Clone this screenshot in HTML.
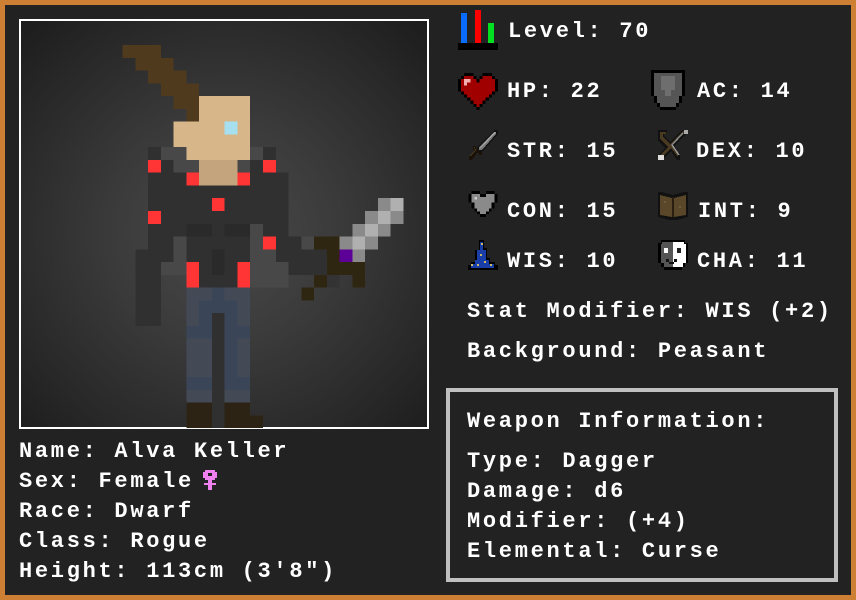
<!DOCTYPE html>
<html><head><meta charset="utf-8"><style>
*{margin:0;padding:0;box-sizing:border-box}
body{width:856px;height:600px;background:#cd8033;position:relative;overflow:hidden}
#main{position:absolute;left:5px;top:5px;width:846px;height:590px;background:#222222}
.t{position:absolute;color:#fff;font-family:"Liberation Mono",monospace;font-weight:bold;font-size:22px;line-height:22px;letter-spacing:2.7px;white-space:pre}
#img{position:absolute;left:19px;top:19px;width:410px;height:410px;border:2px solid #fff;background:radial-gradient(circle at 50% 52%,#4a4a4a 0%,#3a3a3a 40%,#1c1c1c 100%);overflow:hidden}
#wbox{position:absolute;left:446px;top:388px;width:392px;height:194px;border:4px solid #c0c0c0}
svg{position:absolute;shape-rendering:crispEdges}
</style></head><body>
<div id="main"></div>
<div id="img"></div>
<svg style="left:96.5px;top:45px" width="319.25" height="383.1" viewBox="0 0 25 30">
<g fill="#4f3a1d"><rect x="2" y="0" width="3" height="1"/><rect x="3" y="1" width="3" height="1"/><rect x="4" y="2" width="3" height="1"/><rect x="5" y="3" width="3" height="1"/><rect x="6" y="4" width="2" height="1"/><rect x="7" y="5" width="1" height="1"/></g>
<g fill="#303030"><rect x="4" y="8" width="1" height="1"/><rect x="13" y="8" width="1" height="1"/><rect x="5" y="9" width="1" height="1"/><rect x="12" y="9" width="1" height="1"/><rect x="4" y="10" width="11" height="5"/><rect x="4" y="15" width="2" height="1"/><rect x="7" y="15" width="5" height="1"/><rect x="14" y="15" width="2" height="1"/><rect x="3" y="16" width="3" height="1"/><rect x="7" y="16" width="5" height="1"/><rect x="14" y="16" width="4" height="1"/><rect x="3" y="17" width="2" height="5"/><rect x="8" y="17" width="3" height="2"/><rect x="15" y="17" width="3" height="1"/><rect x="9" y="19" width="1" height="11"/></g>
<g fill="#484848"><rect x="5" y="8" width="2" height="1"/><rect x="11" y="8" width="2" height="1"/><rect x="6" y="9" width="2" height="1"/><rect x="11" y="9" width="1" height="1"/><rect x="12" y="14" width="1" height="2"/><rect x="6" y="15" width="1" height="2"/><rect x="16" y="15" width="1" height="1"/><rect x="12" y="16" width="2" height="1"/><rect x="5" y="17" width="2" height="1"/><rect x="12" y="17" width="3" height="2"/></g>
<g fill="#2a2a2a"><rect x="7" y="14" width="2" height="1"/><rect x="10" y="14" width="2" height="1"/><rect x="9" y="16" width="1" height="2"/></g>
<g fill="#d7b68a"><rect x="8" y="4" width="4" height="2"/><rect x="6" y="6" width="6" height="2"/><rect x="7" y="8" width="5" height="1"/></g>
<rect x="10" y="6" width="1" height="1" fill="#a6e0f0"/>
<rect x="8" y="9" width="3" height="2" fill="#c4a47c"/>
<g fill="#ff3535"><rect x="4" y="9" width="1" height="1"/><rect x="13" y="9" width="1" height="1"/><rect x="7" y="10" width="1" height="1"/><rect x="11" y="10" width="1" height="1"/><rect x="9" y="12" width="1" height="1"/><rect x="4" y="13" width="1" height="1"/><rect x="13" y="15" width="1" height="1"/><rect x="7" y="17" width="1" height="2"/><rect x="11" y="17" width="1" height="2"/></g>
<g fill="#444a55"><rect x="7" y="19" width="2" height="1"/><rect x="10" y="19" width="2" height="1"/><rect x="7" y="20" width="1" height="2"/><rect x="11" y="20" width="1" height="2"/><rect x="7" y="23" width="2" height="3"/><rect x="11" y="23" width="1" height="3"/><rect x="7" y="27" width="2" height="1"/><rect x="10" y="27" width="2" height="1"/></g>
<g fill="#3a4558"><rect x="9" y="19" width="1" height="1"/><rect x="8" y="20" width="3" height="1"/><rect x="8" y="21" width="1" height="1"/><rect x="10" y="21" width="1" height="1"/><rect x="7" y="22" width="2" height="1"/><rect x="10" y="22" width="2" height="1"/><rect x="10" y="23" width="1" height="3"/><rect x="7" y="26" width="2" height="1"/><rect x="10" y="26" width="2" height="1"/></g>
<g fill="#2c2314"><rect x="7" y="28" width="2" height="2"/><rect x="10" y="28" width="2" height="2"/><rect x="12" y="29" width="1" height="1"/></g>
<g fill="#2e2610"><rect x="17" y="15" width="2" height="1"/><rect x="18" y="16" width="1" height="1"/><rect x="18" y="17" width="3" height="1"/><rect x="17" y="18" width="1" height="1"/><rect x="20" y="18" width="1" height="1"/><rect x="16" y="19" width="1" height="1"/></g>
<rect x="18" y="18" width="1" height="1" fill="#333"/>
<g fill="#8a8a8a"><rect x="22" y="12" width="1" height="1"/><rect x="21" y="13" width="1" height="1"/><rect x="23" y="13" width="1" height="1"/><rect x="20" y="14" width="1" height="1"/><rect x="22" y="14" width="1" height="1"/><rect x="19" y="15" width="1" height="1"/><rect x="21" y="15" width="1" height="1"/><rect x="20" y="16" width="1" height="1"/></g>
<g fill="#b0b0b0"><rect x="23" y="12" width="1" height="1"/><rect x="22" y="13" width="1" height="1"/><rect x="21" y="14" width="1" height="1"/><rect x="20" y="15" width="1" height="1"/></g>
<rect x="19" y="16" width="1" height="1" fill="#5c0097"/>
</svg>

<svg style="left:458px;top:10px" width="40" height="40" viewBox="0 0 40 40">
<rect x="3" y="3" width="6" height="30" fill="#0a6cff"/><rect x="17" y="0" width="6" height="33" fill="#ff0000"/><rect x="30" y="13" width="6" height="20" fill="#00e020"/><rect x="0" y="33" width="40" height="7" fill="#000"/>
</svg>
<svg style="left:458px;top:73px" width="40" height="37" viewBox="0 0 13 12">
<path d="M2 0h3v1h1v1h1v-1h1v-1h3v1h1v1h1v4h-1v1h-1v1h-1v1h-1v1h-1v1h-1v1h-1v-1h-1v-1h-1v-1h-1v-1h-1v-1h-1v-1h-1v-4h1v-1h1z" fill="#000"/>
<path d="M3 1h2v1h1v1h1v-1h1v-1h3v1h1v4h-1v1h-1v1h-1v1h-1v1h-1v1h-1v-1h-1v-1h-1v-1h-1v-1h-1v-1h-1v-4h1v-1h1z" fill="#a00000"/>
<rect x="2" y="2" width="2" height="2" fill="#f4b0b0"/><rect x="3" y="3" width="1" height="1" fill="#a00000"/>
</svg>
<svg style="left:651px;top:70px" width="34" height="40" viewBox="0 0 34 40">
<path d="M0 0h34v26h-3v7h-3v4h-3v3h-16v-3h-3v-4h-3v-7h-3z" fill="#000"/>
<path d="M3 3h28v23h-3v7h-3v4h-16v-4h-3v-7h-3z" fill="#555"/>
<rect x="10" y="6" width="14" height="14" fill="#6e6e6e"/><rect x="14" y="20" width="6" height="6" fill="#6e6e6e"/>
</svg>
<svg style="left:468px;top:130px" width="30" height="30" viewBox="0 0 30 30">
<path d="M27 0h3v4l-16 18h-5v-5z" fill="#111"/>
<path d="M26 2h2v2l-14 16h-3v-3z" fill="#7a7a7a"/><path d="M26 2h2l-15 16h-1z" fill="#a8a8a8"/>
<path d="M5 16h3v3h3v3h3v3h-3v-2h-2l-5 7h-3v-3l6-5v-2h-2z" fill="#1a1208"/><path d="M6 17h1v2h1v1l-5 6h-1v-1l5-5z" fill="#4a3a20"/>
</svg>
<svg style="left:658px;top:130px" width="30" height="30" viewBox="0 0 30 30">
<path d="M0 0h9v3h-3v3l6 6 12-12h4v4l-12 12 6 8v6h-3l-6-9-7 7h-6v-3l7-7-7-7z" fill="#111"/>
<path d="M2 2h6v2h-3v3l7 7 13-13h2l-13 13 6 8v5l-7-9-7 7h-4l8-8-8-8z" fill="#4a3a22"/>
<path d="M14 15l11-12" stroke="#888" stroke-width="1.5"/><path d="M14 15l7 10" stroke="#999" stroke-width="1.5"/>
<rect x="0" y="25" width="6" height="5" fill="#ddd"/><rect x="26" y="0" width="4" height="4" fill="#aaa"/>
</svg>
<svg style="left:468px;top:191px" width="30" height="29" viewBox="0 0 10 10">
<path d="M1 0h3v1h2v-1h3v1h1v3h-1v2h-1v1h-1v1h-1v1h-2v-1h-1v-1h-1v-1h-1v-2h-1v-3h1z" fill="#000"/>
<path d="M1 1h3v1h2v-1h3v3h-1v2h-1v1h-1v1h-2v-1h-1v-1h-1v-2h-1z" fill="#8a8a8a"/>
<rect x="2" y="2" width="1" height="1" fill="#ccc"/>
</svg>
<svg style="left:658px;top:192px" width="30" height="28" viewBox="0 0 30 28">
<path d="M0 0h4l11 3l11-3h4v25l-11 3h-8l-11-3z" fill="#111"/>
<path d="M2 3l12 3v19l-12-2z" fill="#5a4628"/><path d="M16 6l12-3v20l-12 2z" fill="#5a4628"/>
<rect x="14" y="5" width="2" height="20" fill="#2a1e10"/>
<rect x="6" y="9" width="2" height="2" fill="#6e5a38"/><rect x="21" y="14" width="2" height="2" fill="#6e5a38"/>
</svg>
<svg style="left:468px;top:240px" width="30" height="30" viewBox="0 0 30 30">
<path d="M11 0h5v8h3v10h3v4h5v3h3v5h-30v-5h3v-3h4v-12h4z" fill="#000"/>
<path d="M12 2h3v8h3v10h3v4h5v4h-23v-4h4v-4h2v-10h3z" fill="#1a3ea8"/>
<rect x="13" y="3" width="2" height="2" fill="#c8b86a"/><rect x="12" y="14" width="2" height="2" fill="#c8b86a"/><rect x="16" y="21" width="2" height="2" fill="#c8b86a"/><rect x="3" y="24" width="2" height="2" fill="#c8b86a"/><rect x="22" y="24" width="2" height="2" fill="#c8b86a"/><rect x="9" y="24" width="2" height="2" fill="#c8b86a"/>
</svg>
<svg style="left:658px;top:240px" width="30" height="30" viewBox="0 0 30 30">
<path d="M3 0h24v3h3v20h-3v4h-3v3h-18v-3h-3v-4h-3v-20h3z" fill="#000"/>
<path d="M4 2h11v25h-9v-4h-3v-19h1z" fill="#555"/>
<path d="M15 2h11v2h2v19h-3v4h-10z" fill="#fff"/>
<rect x="6" y="8" width="4" height="5" fill="#fff"/><rect x="19" y="8" width="4" height="5" fill="#222"/>
<path d="M8 19h3v3h5v-3h3v3h-3v2h-5v-2h-3z" fill="#111"/>
</svg>

<div class="t" style="left:508px;top:21px">Level: 70</div>
<div class="t" style="left:507px;top:81px">HP: 22</div>
<div class="t" style="left:697px;top:81px">AC: 14</div>
<div class="t" style="left:507px;top:141px">STR: 15</div>
<div class="t" style="left:696px;top:141px">DEX: 10</div>
<div class="t" style="left:507px;top:201px">CON: 15</div>
<div class="t" style="left:698px;top:201px">INT: 9</div>
<div class="t" style="left:507px;top:251px">WIS: 10</div>
<div class="t" style="left:697px;top:251px">CHA: 11</div>
<div class="t" style="left:467px;top:301px">Stat Modifier: WIS (+2)</div>
<div class="t" style="left:467px;top:341px">Background: Peasant</div>
<div id="wbox"></div>
<div class="t" style="left:467px;top:411px">Weapon Information:</div>
<div class="t" style="left:467px;top:451px">Type: Dagger</div>
<div class="t" style="left:467px;top:481px">Damage: d6</div>
<div class="t" style="left:467px;top:511px">Modifier: (+4)</div>
<div class="t" style="left:467px;top:541px">Elemental: Curse</div>

<div class="t" style="left:19px;top:441px">Name: Alva Keller</div>
<div class="t" style="left:19px;top:471px">Sex: Female</div>
<svg style="left:203px;top:470px" width="14" height="20" viewBox="0 0 14 20">
<path d="M2 0h10v2h2v6h-2v2h-3v3h4v2h-4v5h-4v-5h-4v-2h4v-3h-3v-2h-2v-6h2z" fill="#f080f0"/>
<rect x="5" y="3" width="4" height="3" fill="#222"/>
</svg>
<div class="t" style="left:19px;top:501px">Race: Dwarf</div>
<div class="t" style="left:19px;top:531px">Class: Rogue</div>
<div class="t" style="left:19px;top:561px">Height: 113cm (3'8")</div>
</body></html>
